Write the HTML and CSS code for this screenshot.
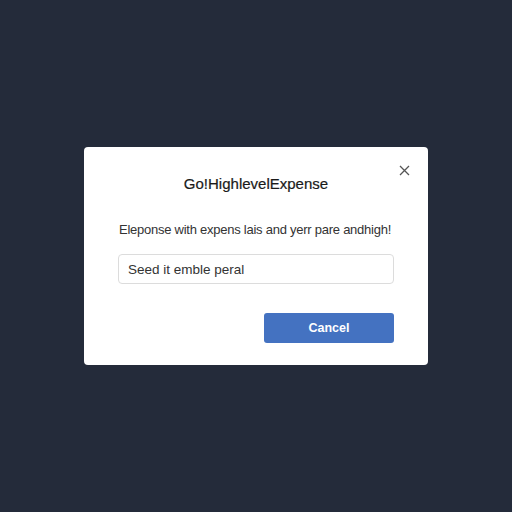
FILE: index.html
```html
<!DOCTYPE html>
<html>
<head>
<meta charset="utf-8">
<link rel="stylesheet" href="styles.css">
</head>
<body>
<div class="dialog">
  <button class="close" aria-label="Close">
    <svg width="11" height="11" viewBox="0 0 11 11"><path d="M1 1L10 10M10 1L1 10" stroke="#555" stroke-width="1.3" fill="none"/></svg>
  </button>
  <h1 class="title">Go!HighlevelExpense</h1>
  <p class="message">Eleponse with expens lais and yerr pare andhigh!</p>
  <div class="field">Seed it emble peral</div>
  <div class="actions">
    <button class="btn">Cancel</button>
  </div>
</div>
</body>
</html>
```
FILE: styles.css
```css
html, body {
  margin: 0;
  height: 100%;
}
body {
  background: #242b3a;
  display: flex;
  align-items: center;
  justify-content: center;
  font-family: "Liberation Sans", Arial, sans-serif;
}
.dialog {
  position: relative;
  width: 344px;
  height: 218px;
  box-sizing: border-box;
  background: #ffffff;
  border-radius: 4px;
  padding: 28px 34px 0 34px;
  display: flex;
  flex-direction: column;
}
.close {
  position: absolute;
  top: 18px;
  right: 18px;
  background: none;
  border: 0;
  padding: 0;
  width: 11px;
  height: 11px;
  display: flex;
}
.title {
  margin: 0;
  font-size: 15px;
  font-weight: normal;
  color: #1a1a1a;
  text-align: center;
  line-height: 18px;
  -webkit-text-stroke: 0.2px #1a1a1a;
}
.message {
  margin: 28px 0 0 1px;
  font-size: 13px;
  color: #333;
  line-height: 18px;
  white-space: nowrap;
  letter-spacing: -0.25px;
}
.field {
  margin-top: 15px;
  height: 30px;
  box-sizing: border-box;
  border: 1px solid #dcdcdc;
  border-radius: 4px;
  padding: 0 9px;
  display: flex;
  align-items: center;
  font-size: 13.5px;
  color: #333;
}
.actions {
  margin-top: 29px;
  display: flex;
  justify-content: flex-end;
}
.btn {
  width: 130px;
  height: 30px;
  border: 0;
  border-radius: 3px;
  background: #4472c1;
  color: #fff;
  font-family: "Liberation Sans", Arial, sans-serif;
  font-size: 12.5px;
  font-weight: bold;
}
```
